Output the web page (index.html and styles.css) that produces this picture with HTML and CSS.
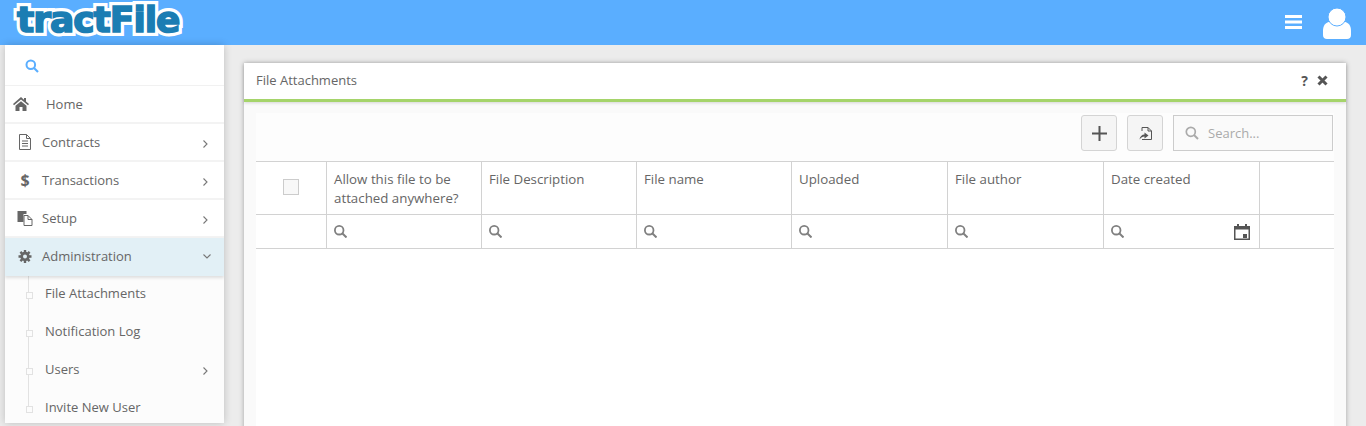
FILE: index.html
```html
<!DOCTYPE html>
<html lang="en">
<head>
    <meta charset="UTF-8">
    <title>File Attachments</title>
    <link rel="stylesheet" href="styles.css">
</head>
<body>
    <!-- Top bar -->
    <div class="header">
        <span class="logo" data-text="tractFile">tractFile</span>
        <div class="header-right">
            <svg class="burger" width="17" height="14" viewBox="0 0 17 14"><path d="M0 0h17v3H0zM0 5.500h17v3H0zM0 11h17v3H0z" fill="#fff"/></svg>
            <svg class="user" width="28" height="31" viewBox="0 0 28 31"><path d="M7 13.500h14c4.500 1 7 4 7 9V27c0 2.500-1.500 4-4 4H4c-2.500 0-4-1.500-4-4v-4.500c0-5 2.500-8 7-9z" fill="#fff"/><circle cx="14" cy="9" r="9" fill="#fff" stroke="#5aaeff"/></svg>
        </div>
    </div>

    <div class="page">
        <!-- Side menu -->
        <div class="sidebar">
            <div class="side-search">
                <svg width="14" height="14" viewBox="0 0 14 14"><circle cx="5.800" cy="5.800" r="4.300" fill="none" stroke="#5aaeff" stroke-width="2"/><path d="M9 9l4 4" stroke="#5aaeff" stroke-width="2.200"/></svg>
            </div>
            <a class="menu-item home">
                <svg class="menu-icon" width="16" height="14" viewBox="0 0 16 14"><path d="M8 0L0 7l1 1.200L8 2.500l7 5.700L16 7l-3-2.600V1h-2v1.700zM2.500 8.800V14h4v-4h3v4h4V8.800L8 4.200z" fill="#666"/></svg>
                <span>Home</span>
            </a>
            <a class="menu-item">
                <svg class="menu-icon" width="14" height="16" viewBox="0 0 14 16"><path d="M1.500.5h7l4 4v11h-11zM8.500.5v4h4M4 7h6M4 9.500h6M4 12h6" fill="none" stroke="#666"/></svg>
                <span>Contracts</span>
                <svg class="chev" width="5" height="8" viewBox="0 0 5 8"><path d="M.5.500L4 4 .5 7.500" fill="none" stroke="#777" stroke-width="1.100"/></svg>
            </a>
            <a class="menu-item">
                <span class="menu-icon dollar">$</span>
                <span>Transactions</span>
                <svg class="chev" width="5" height="8" viewBox="0 0 5 8"><path d="M.5.500L4 4 .5 7.500" fill="none" stroke="#777" stroke-width="1.100"/></svg>
            </a>
            <a class="menu-item">
                <svg class="menu-icon" width="15" height="15" viewBox="0 0 15 15"><path d="M0 0h9v3H6v8H0z" fill="#666"/><path d="M6.500 4.500h4l4 4v6h-8z" fill="#fff" stroke="#666"/><path d="M10.500 4.500v4h4" fill="none" stroke="#666"/></svg>
                <span>Setup</span>
                <svg class="chev" width="5" height="8" viewBox="0 0 5 8"><path d="M.5.500L4 4 .5 7.500" fill="none" stroke="#777" stroke-width="1.100"/></svg>
            </a>
            <a class="menu-item active">
                <svg class="menu-icon" width="13" height="13" viewBox="0 0 13 13"><circle cx="6.500" cy="6.500" r="4.700" fill="#666"/><path d="M6.500 0v13M0 6.500h13M1.900 1.900l9.200 9.200M11.100 1.900l-9.200 9.200" stroke="#666" stroke-width="2.400"/><circle cx="6.500" cy="6.500" r="2" fill="#e2f0f6"/></svg>
                <span>Administration</span>
                <svg class="chev down" width="8" height="5" viewBox="0 0 8 5"><path d="M.5.500L4 4 7.500.5" fill="none" stroke="#777" stroke-width="1.100"/></svg>
            </a>
            <div class="submenu">
                <a class="sub-item"><span>File Attachments</span></a>
                <a class="sub-item"><span>Notification Log</span></a>
                <a class="sub-item"><span>Users</span><svg class="chev" width="5" height="8" viewBox="0 0 5 8"><path d="M.5.500L4 4 .5 7.500" fill="none" stroke="#777" stroke-width="1.100"/></svg></a>
                <a class="sub-item"><span>Invite New User</span></a>
            </div>
        </div>

        <!-- Main panel -->
        <div class="content">
            <div class="panel">
                <div class="panel-head">
                    <span class="panel-title">File Attachments</span>
                    <div class="panel-tools">
                        <span class="help">?</span>
                        <svg width="11" height="11" viewBox="0 0 11 11"><path d="M1.500 1.500l8 8M9.500 1.500l-8 8" stroke="#555" stroke-width="3"/></svg>
                    </div>
                </div>
                <div class="panel-body">
                    <div class="inner">
                        <div class="toolbar">
                            <button class="tool-btn add">
                                <svg width="15" height="15" viewBox="0 0 15 15"><path d="M7.500 0v15M0 7.500h15" stroke="#555" stroke-width="2"/></svg>
                            </button>
                            <button class="tool-btn">
                                <svg width="13" height="13" viewBox="0 0 13 13"><path d="M3 4V.5h6l3.500 3.500v8.500H3" fill="none" stroke="#555"/><path d="M9 .5V4h3.500" fill="none" stroke="#555"/><path d="M.5 12.500c.3-3 2.500-5 5-5V5.500l4 3-4 3V9.500c-2 0-3.500 1-5 3z" fill="#555"/></svg>
                            </button>
                            <div class="search-box">
                                <svg width="14" height="14" viewBox="0 0 14 14"><circle cx="5.800" cy="5.800" r="4.500" fill="none" stroke="#aaa" stroke-width="1.700"/><path d="M9 9l4 4" stroke="#aaa" stroke-width="2"/></svg>
                                <span>Search...</span>
                            </div>
                        </div>
                        <div class="grid">
                            <div class="cell head check"><span class="checkbox"></span></div>
                            <div class="cell head">Allow this file to be attached anywhere?</div>
                            <div class="cell head">File Description</div>
                            <div class="cell head">File name</div>
                            <div class="cell head">Uploaded</div>
                            <div class="cell head">File author</div>
                            <div class="cell head">Date created</div>
                            <div class="cell head last"></div>

                            <div class="cell filter"></div>
                            <div class="cell filter"><svg class="lens" width="13" height="13" viewBox="0 0 13 13"><circle cx="5.200" cy="5.200" r="4.300" fill="none" stroke="#808080" stroke-width="1.800"/><path d="M8.200 8.200l4.300 4.300" stroke="#808080" stroke-width="2"/></svg></div>
                            <div class="cell filter"><svg class="lens" width="13" height="13" viewBox="0 0 13 13"><circle cx="5.200" cy="5.200" r="4.300" fill="none" stroke="#808080" stroke-width="1.800"/><path d="M8.200 8.200l4.300 4.300" stroke="#808080" stroke-width="2"/></svg></div>
                            <div class="cell filter"><svg class="lens" width="13" height="13" viewBox="0 0 13 13"><circle cx="5.200" cy="5.200" r="4.300" fill="none" stroke="#808080" stroke-width="1.800"/><path d="M8.200 8.200l4.300 4.300" stroke="#808080" stroke-width="2"/></svg></div>
                            <div class="cell filter"><svg class="lens" width="13" height="13" viewBox="0 0 13 13"><circle cx="5.200" cy="5.200" r="4.300" fill="none" stroke="#808080" stroke-width="1.800"/><path d="M8.200 8.200l4.300 4.300" stroke="#808080" stroke-width="2"/></svg></div>
                            <div class="cell filter"><svg class="lens" width="13" height="13" viewBox="0 0 13 13"><circle cx="5.200" cy="5.200" r="4.300" fill="none" stroke="#808080" stroke-width="1.800"/><path d="M8.200 8.200l4.300 4.300" stroke="#808080" stroke-width="2"/></svg></div>
                            <div class="cell filter date"><svg class="lens" width="13" height="13" viewBox="0 0 13 13"><circle cx="5.200" cy="5.200" r="4.300" fill="none" stroke="#808080" stroke-width="1.800"/><path d="M8.200 8.200l4.300 4.300" stroke="#808080" stroke-width="2"/></svg>
                                <svg width="16" height="16" viewBox="0 0 16 16"><path d="M3 0h2v2h6V0h2v2h3v14H0V2h3z" fill="#555"/><path d="M1.500 5.500h13v9h-13z" fill="#fff"/><path d="M9 10h4v4H9z" fill="#555"/></svg>
                            </div>
                            <div class="cell filter last"></div>
                        </div>
                    </div>
                </div>
            </div>
        </div>
    </div>
</body>
</html>
```

FILE: styles.css
```css
* {
    box-sizing: border-box;
}
html, body {
    height: 100%;
}
body {
    margin: 0;
    background-color: #ececec;
    font-family: "Open Sans", sans-serif;
    font-size: 13px;
    color: #666;
    overflow: hidden;
}

/* Top bar */
.header {
    height: 45px;
    background-color: #5aaeff;
    display: flex;
    align-items: center;
    justify-content: space-between;
    padding: 0 15px 0 17px;
}
.logo {
    position: relative;
    isolation: isolate;
    font-family: "DejaVu Sans", sans-serif;
    font-weight: bold;
    font-size: 36px;
    line-height: 45px;
    letter-spacing: -1px;
    color: #1b7db3;
    -webkit-text-stroke: 1.6px #1b7db3;
    margin-top: -7px;
}
/* white outline sits behind the letters */
.logo::before {
    content: attr(data-text);
    position: absolute;
    left: 0;
    top: 0;
    z-index: -1;
    color: #fff;
    -webkit-text-stroke: 8px #fff;
    text-shadow: 1px 3px 2px rgba(0, 0, 0, 0.2);
}
.header-right {
    display: flex;
    align-items: center;
    gap: 21px;
}
.burger {
    margin-top: -1px;
}
.user {
    margin-top: 2px;
}

.page {
    display: flex;
    height: 381px;
}

/* Side menu */
.sidebar {
    width: 219px;
    margin-left: 5px;
    height: 378px;
    background-color: #fff;
    box-shadow: 0 0 8px rgba(0, 0, 0, 0.2);
    flex-shrink: 0;
    overflow: hidden;
}
.side-search {
    height: 41px;
    padding: 14px 0 0 20px;
    border-bottom: 1px solid #f1f1f1;
}
.menu-item {
    height: 38px;
    display: flex;
    align-items: center;
    padding: 0 16px 0 12px;
    border-bottom: 2px solid #f3f3f3;
}
.menu-item .menu-icon {
    width: 16px;
    margin-right: 9px;
    flex-shrink: 0;
}
.menu-item.home .menu-icon {
    margin-left: -4px;
    margin-right: 17px;
}
.menu-item .chev {
    margin-left: auto;
    margin-top: 3px;
}
.menu-item .chev.down {
    margin-right: -3px;
    margin-top: 0;
}
.dollar {
    font-weight: bold;
    font-size: 16px;
    color: #666;
    text-align: center;
}
.menu-item.active {
    background-color: #e2f0f6;
    border-bottom: none;
    padding-bottom: 2px;
    box-shadow: 0 2px 3px rgba(0, 0, 0, 0.12);
    position: relative;
}
.submenu {
    background-color: #fcfcfc;
    background-image: linear-gradient(#e2e2e2, #e2e2e2);
    background-size: 1px 135px;
    background-position: 23px 0;
    background-repeat: no-repeat;
}
.sub-item {
    height: 38px;
    display: flex;
    align-items: center;
    padding: 0 16px 4px 40px;
    position: relative;
}
.sub-item::before {
    content: "";
    position: absolute;
    left: 21px;
    top: 16px;
    width: 5px;
    height: 5px;
    border: 1px solid #e2e2e2;
    background-color: #fcfcfc;
}
.sub-item .chev {
    margin-left: auto;
    margin-top: 3px;
}

/* Main panel */
.content {
    flex: 1;
    padding: 18px 20px 0 20px;
}
.panel {
    background-color: #fafafa;
    box-shadow: 0 0 5px rgba(0, 0, 0, 0.3);
    height: 400px;
}
.panel-head {
    height: 39px;
    background-color: #fff;
    border-bottom: 3px solid #a5d46a;
    display: flex;
    align-items: center;
    justify-content: space-between;
    padding: 0 18px 2px 12px;
    box-shadow: 0 1px 3px rgba(0, 0, 0, 0.15);
}
.panel-tools {
    display: flex;
    align-items: center;
    gap: 9px;
}
.help {
    font-weight: bold;
    color: #555;
    font-size: 14px;
}
.panel-body {
    padding: 11px 12px 0 12px;
}
.inner {
    background-color: #fff;
    height: 320px;
}
.toolbar {
    height: 48px;
    display: flex;
    align-items: flex-start;
    justify-content: flex-end;
    padding-top: 2px;
    gap: 10px;
    background-color: #fdfdfd;
}
.tool-btn {
    width: 36px;
    height: 36px;
    background-color: #f5f5f5;
    border: 1px solid #d4d4d4;
    border-radius: 3px;
    padding: 0;
    display: flex;
    align-items: center;
    justify-content: center;
}
.search-box {
    width: 160px;
    height: 36px;
    margin-right: 1px;
    background-color: #fafafa;
    border: 1px solid #ccc;
    display: flex;
    align-items: center;
    gap: 9px;
    padding-left: 11px;
    color: #aaa;
}
.grid {
    display: grid;
    grid-template-columns: 71px 155px 155px 155px 156px 156px 156px 74px;
    grid-template-rows: 53px 34px;
    border-top: 1px solid #d2d2d2;
}
.cell {
    border-right: 1px solid #d2d2d2;
    border-bottom: 1px solid #d2d2d2;
    background-color: #fff;
}
.cell.last {
    border-right: none;
}
.cell.head {
    padding: 8px 7px 0 7px;
    line-height: 19px;
    font-size: 13.3px;
}
.cell.check {
    padding: 17px 0 0 27px;
}
.checkbox {
    display: block;
    width: 16px;
    height: 16px;
    border: 1px solid #ccc;
    background-color: #f8f8f8;
}
.cell.filter {
    display: flex;
    align-items: center;
    justify-content: space-between;
    padding: 0 9px 0 7px;
}
.lens {
    flex-shrink: 0;
}
```
